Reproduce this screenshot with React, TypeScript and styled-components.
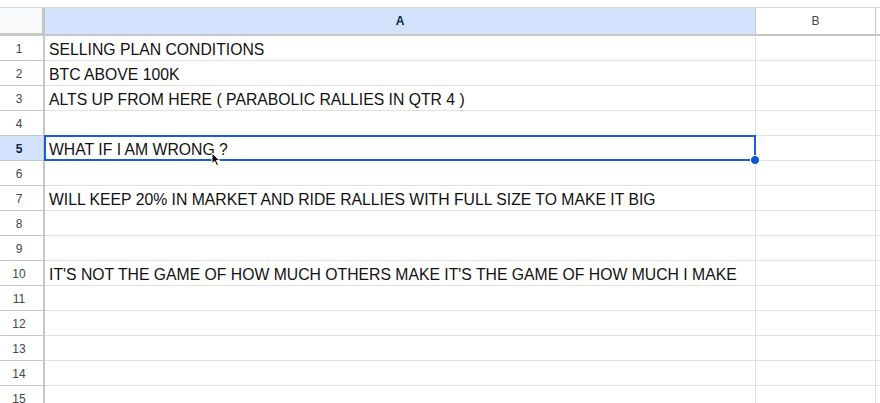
import React from "react";
import styled, { createGlobalStyle } from "styled-components";

const GlobalStyle = createGlobalStyle`
  html, body {
    margin: 0;
    padding: 0;
    background: #fff;
    overflow: hidden;
  }
  body {
    font-family: "Liberation Sans", Arial, sans-serif;
  }
`;

const ROW_HEAD = 45;
const COL_A = 711;
const COL_B = 120;

const rows: string[] = [
  "SELLING PLAN CONDITIONS",
  "BTC ABOVE 100K",
  "ALTS UP FROM HERE ( PARABOLIC RALLIES IN QTR 4 )",
  "",
  "WHAT IF I AM WRONG ?",
  "",
  "WILL KEEP 20% IN MARKET AND RIDE RALLIES WITH FULL SIZE TO MAKE IT BIG",
  "",
  "",
  "IT'S NOT THE GAME OF HOW MUCH OTHERS MAKE IT'S THE GAME OF HOW MUCH I MAKE",
  "",
  "",
  "",
  "",
  "",
];

const SELECTED = 5;

const Page = styled.div`
  width: 880px;
  height: 403px;
  overflow: hidden;
  background: #fff;
`;

const TopStrip = styled.div`
  height: 8px;
  border-bottom: 1px solid #d6d6d6;
  box-sizing: border-box;
`;

const HeaderRow = styled.div`
  display: flex;
  height: 28px;
`;

const Corner = styled.div`
  width: ${ROW_HEAD}px;
  flex-shrink: 0;
  box-sizing: border-box;
  background: #f8f9fa;
  border-right: 3px solid #c4c7c5;
  border-bottom: 3px solid #c4c7c5;
`;

const ColHeader = styled.div<{ $width: number; $active?: boolean }>`
  width: ${({ $width }) => $width}px;
  flex-shrink: 0;
  box-sizing: border-box;
  display: flex;
  align-items: center;
  justify-content: center;
  font-size: 12px;
  color: ${({ $active }) => ($active ? "#0b1f44" : "#444746")};
  font-weight: ${({ $active }) => ($active ? 700 : 400)};
  background: ${({ $active }) => ($active ? "#d3e3fd" : "#fff")};
  border-right: 1px solid #c4c7c5;
  border-bottom: 2px solid #c4c7c5;
`;

const HeaderFiller = styled.div`
  flex: 1;
  border-bottom: 2px solid #c4c7c5;
`;

const Row = styled.div`
  display: flex;
  height: 25px;
`;

const RowHeader = styled.div<{ $active?: boolean }>`
  width: ${ROW_HEAD}px;
  flex-shrink: 0;
  box-sizing: border-box;
  display: flex;
  align-items: center;
  justify-content: center;
  padding-right: 5px;
  padding-top: 1px;
  font-size: 12px;
  color: ${({ $active }) => ($active ? "#0b1f44" : "#444746")};
  font-weight: ${({ $active }) => ($active ? 700 : 400)};
  background: ${({ $active }) => ($active ? "#d3e3fd" : "#fff")};
  border-right: 2px solid #c4c7c5;
  border-bottom: 1px solid #c4c7c5;
`;

const Cell = styled.div<{ $width: number }>`
  position: relative;
  width: ${({ $width }) => $width}px;
  flex-shrink: 0;
  box-sizing: border-box;
  display: flex;
  align-items: center;
  padding-left: 4px;
  padding-top: 3px;
  font-size: 15.75px;
  color: #111;
  white-space: nowrap;
  border-right: 1px solid #e1e1e1;
  border-bottom: 1px solid #e1e1e1;
`;

const RowFiller = styled.div`
  flex: 1;
  border-bottom: 1px solid #e1e1e1;
`;

const Selection = styled.div`
  position: absolute;
  z-index: 2;
  left: -1px;
  top: -1px;
  right: -1px;
  bottom: -1px;
  border: 2px solid #1a5fd0;
  pointer-events: none;
`;

const Handle = styled.div`
  position: absolute;
  right: -6px;
  bottom: -6px;
  width: 10px;
  height: 10px;
  border-radius: 50%;
  background: #0b57d0;
  border: 1px solid #fff;
  box-sizing: border-box;
`;

const Pointer = styled.svg`
  position: absolute;
  z-index: 3;
  left: 166px;
  top: 16px;
  width: 10px;
  height: 15px;
`;

export default function App() {
  return (
    <Page>
      <GlobalStyle />
      <TopStrip />
      <HeaderRow>
        <Corner />
        <ColHeader $width={COL_A} $active>
          A
        </ColHeader>
        <ColHeader $width={COL_B}>B</ColHeader>
        <HeaderFiller />
      </HeaderRow>
      {rows.map((text, i) => {
        const n = i + 1;
        const active = n === SELECTED;
        return (
          <Row key={n}>
            <RowHeader $active={active}>{n}</RowHeader>
            <Cell $width={COL_A}>
              {text}
              {active && (
                <>
                  <Selection>
                    <Handle />
                  </Selection>
                  <Pointer viewBox="0 0 10 15">
                    <path
                      d="M1 1 L1 11.5 L3.6 9.2 L5.6 13.6 L7.4 12.8 L5.4 8.5 L8.8 8.5 Z"
                      fill="#000"
                      stroke="#fff"
                      strokeWidth="1"
                      strokeLinejoin="round"
                    />
                  </Pointer>
                </>
              )}
            </Cell>
            <Cell $width={COL_B} />
            <RowFiller />
          </Row>
        );
      })}
    </Page>
  );
}
